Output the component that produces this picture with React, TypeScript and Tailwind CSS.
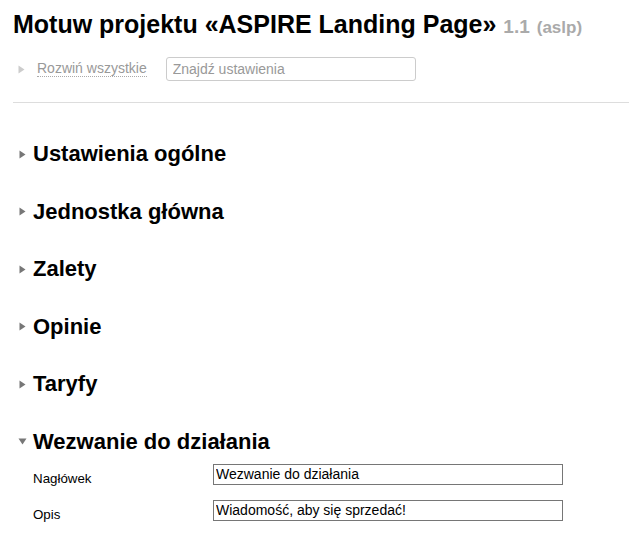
import React from 'react';

const Arrow = ({ open, color = '#777' }: { open?: boolean; color?: string }) =>
  open ? (
    <svg width="9" height="7" viewBox="0 0 9 7" className="shrink-0">
      <polygon points="0.5,0.5 8.5,0.5 4.5,6.5" fill={color} />
    </svg>
  ) : (
    <svg width="7" height="9" viewBox="0 0 7 9" className="shrink-0">
      <polygon points="0.5,0.5 6.5,4.5 0.5,8.5" fill={color} />
    </svg>
  );

const sections = ['Ustawienia ogólne', 'Jednostka główna', 'Zalety', 'Opinie', 'Taryfy'];

const App: React.FC = () => {
  return (
    <div className="min-h-[543px] bg-white pl-[13px] font-['Liberation_Sans',Arial,sans-serif] text-black">
      <h1 className="mt-[9px] text-[25px] font-bold leading-[30px] whitespace-nowrap">
        Motuw projektu «ASPIRE Landing Page»{' '}
        <span className="text-[19px] text-[#aaaaaa]">1.1</span>{' '}
        <span className="text-[17px] text-[#aaaaaa]">(aslp)</span>
      </h1>

      <div className="mt-[14px] flex h-[24px] items-center">
        <div className="ml-[5px] flex w-[19px] items-center">
          <Arrow color="#cccccc" />
        </div>
        <a href="#" className="border-b border-dotted border-[#aaaaaa] text-[14px] leading-[15px] text-[#999999]">
          Rozwiń wszystkie
        </a>
        <input
          placeholder="Znajdź ustawienia"
          className="ml-[19px] h-[24px] w-[250px] rounded-[3px] border border-[#cccccc] px-[6px] text-[14px] placeholder:text-[#999999] outline-none"
        />
      </div>

      <div className="mt-[21px] h-px bg-[#dddddd]" />

      <div className="mt-[38px] flex flex-col gap-[31.6px]">
        {sections.map((s) => (
          <div key={s} className="flex h-[26px] items-center">
            <div className="ml-[6px] w-[14px]">
              <Arrow />
            </div>
            <h2 className="text-[22px] font-bold leading-[26px]">{s}</h2>
          </div>
        ))}
        <div>
          <div className="flex h-[26px] items-center">
            <div className="ml-[5px] w-[15px]">
              <Arrow open />
            </div>
            <h2 className="text-[22px] font-bold leading-[26px]">Wezwanie do działania</h2>
          </div>
          <div className="mt-[9px] flex flex-col gap-[15px] pl-[20px]">
            <div className="flex h-[21px]">
              <label className="w-[180px] pt-[7px] text-[13.33px] leading-[15px]">Nagłówek</label>
              <input
                defaultValue="Wezwanie do działania"
                className="h-[21px] w-[350px] border border-[#767676] px-[2px] text-[14px] outline-none"
              />
            </div>
            <div className="flex h-[21px]">
              <label className="w-[180px] pt-[7px] text-[13.33px] leading-[15px]">Opis</label>
              <input
                defaultValue="Wiadomość, aby się sprzedać!"
                className="h-[21px] w-[350px] border border-[#767676] px-[2px] text-[14px] outline-none"
              />
            </div>
          </div>
        </div>
      </div>
    </div>
  );
};

export default App;
